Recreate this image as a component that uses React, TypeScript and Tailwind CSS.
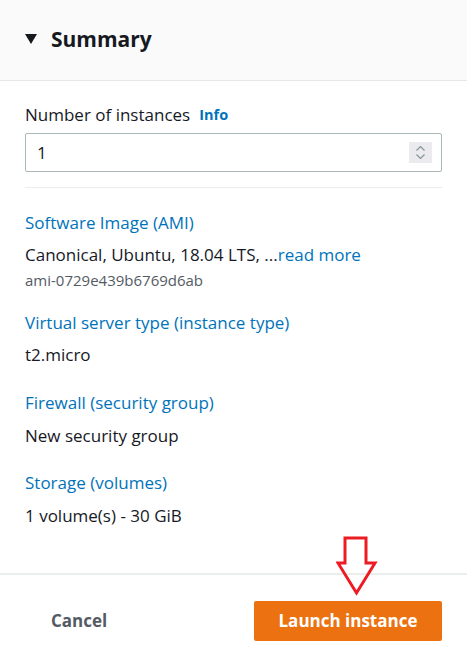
import React from "react";

export default function App() {
  return (
    <div
      className="relative w-[467px] h-[666px] bg-white overflow-hidden text-[#16191f]"
      style={{ fontFamily: '"Open Sans", "Noto Sans", Arial, sans-serif' }}
    >
      <div className="h-[81px] bg-[#fafafa] border-b border-[#e4e8e8] flex items-center pl-[25px] pb-[1px]">
        <svg width="12" height="11" viewBox="0 0 12 11" className="mr-[14px]">
          <polygon points="0,0 12,0 6,10" fill="#16191f" />
        </svg>
        <span className="text-[21px] font-bold leading-none">Summary</span>
      </div>

      <div className="px-[25px]">
        <div className="mt-[22px] flex items-center h-[24px] text-[17px]">
          <span>Number of instances</span>
          <span className="ml-[9px] text-[14.5px] font-bold text-[#0073bb]">Info</span>
        </div>
        <div className="mt-[6px] h-[39px] border border-[#aab7b8] rounded-[2px] flex items-center pl-[11px] pr-[9px]">
          <span className="flex-1 text-[17px]">1</span>
          <div className="w-[23px] h-[21px] bg-[#ebebef] flex flex-col items-center justify-center gap-[3px]">
            <svg width="9" height="5" viewBox="0 0 9 5">
              <polyline points="0.5,4.5 4.5,0.5 8.5,4.5" fill="none" stroke="#879596" strokeWidth="1.2" />
            </svg>
            <svg width="9" height="5" viewBox="0 0 9 5">
              <polyline points="0.5,0.5 4.5,4.5 8.5,0.5" fill="none" stroke="#879596" strokeWidth="1.2" />
            </svg>
          </div>
        </div>
        <div className="mt-[15px] h-px bg-[#eaeded]" />

        <div className="mt-[23px] h-[24px] leading-[24px] text-[17px] text-[#0073bb]">Software Image (AMI)</div>
        <div className="mt-[8px] h-[24px] leading-[24px] text-[17px]">
          Canonical, Ubuntu, 18.04 LTS, ...<span className="text-[#0073bb]">read more</span>
        </div>
        <div className="mt-[3px] h-[20px] leading-[20px] text-[15px] text-[#545b64]">ami-0729e439b6769d6ab</div>

        <div className="mt-[21px] h-[24px] leading-[24px] text-[17px] text-[#0073bb]">Virtual server type (instance type)</div>
        <div className="mt-[8px] h-[24px] leading-[24px] text-[17px]">t2.micro</div>

        <div className="mt-[24px] h-[24px] leading-[24px] text-[17px] text-[#0073bb]">Firewall (security group)</div>
        <div className="mt-[9px] h-[24px] leading-[24px] text-[17px]">New security group</div>

        <div className="mt-[23px] h-[24px] leading-[24px] text-[17px] text-[#0073bb]">Storage (volumes)</div>
        <div className="mt-[9px] h-[24px] leading-[24px] text-[17px]">1 volume(s) - 30 GiB</div>
      </div>

      <div className="mt-[45px] border-t-2 border-[#eaeded] flex items-center justify-between pl-[51px] pr-[25px] pt-[26px]">
        <span className="text-[17px] font-bold text-[#545b64]">Cancel</span>
        <button className="w-[188px] h-[40px] bg-[#ec7211] rounded-[2px] text-white text-[17px] font-bold">
          Launch instance
        </button>
      </div>

      <svg
        className="absolute left-[336px] top-[536px]"
        width="42"
        height="60"
        viewBox="0 0 42 60"
      >
        <polygon
          points="9,2 30,2 30,27 39,27 20.5,57 2,27 9,27"
          fill="none"
          stroke="#ed1c24"
          strokeWidth="3"
          strokeLinejoin="miter"
        />
      </svg>
    </div>
  );
}
